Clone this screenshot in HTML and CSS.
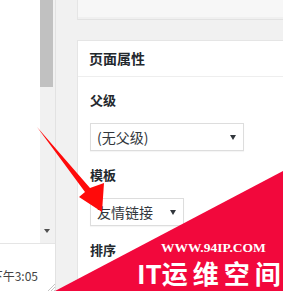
FILE: index.html
```html
<!DOCTYPE html>
<html lang="zh-CN">
<head>
<meta charset="utf-8">
<title>页面属性</title>
<link rel="stylesheet" href="styles.css">
</head>
<body>
<div class="page">
  <div class="editor">
    <div class="editor-main">
      <div class="textarea"></div>
      <div class="scrollbar">
        <div class="thumb"></div>
        <div class="track"><span class="sb-arrow"></span></div>
      </div>
    </div>
    <div class="status">
      <span class="time">最后编辑于 下午3:05</span>
      <svg class="grip" width="8" height="8" viewBox="0 0 8 8"><path d="M8 1 L1 8 M8 4 L4 8 M8 7 L7 8" stroke="#c4c4c4" stroke-width="1"/></svg>
    </div>
  </div>
  <div class="side">
    <div class="box-top"></div>
    <div class="box">
      <h2 class="box-title">页面属性</h2>
      <div class="inside">
        <p class="label">父级</p>
        <div class="select select-wide"><span>(无父级)</span><span class="caret"></span></div>
        <p class="label">模板</p>
        <div class="select select-narrow"><span>友情链接</span><span class="caret"></span></div>
        <p class="label">排序</p>
      </div>
    </div>
  </div>
  <svg class="overlay" width="283" height="291" viewBox="0 0 283 291">
    <polygon points="283,171 55,291 283,291" fill="#f2083c"/>
    <polygon points="37,127 90,188 104,183 102,212 79,197 85,192" fill="#ff0a0a"/>
  </svg>
  <div class="wm-url">WWW.94IP.COM</div>
  <div class="wm-name"><span class="wm-it">IT</span><span class="wm-cn">运维空间</span></div>
</div>
</body>
</html>
```

FILE: styles.css
```css
* { box-sizing: border-box; }
html, body { margin: 0; padding: 0; }
body {
  width: 283px;
  height: 291px;
  overflow: hidden;
  background: #f1f1f1;
  font-family: "Noto Sans CJK SC", "Noto Sans", sans-serif;
  color: #23282d;
}
.page {
  position: relative;
  display: flex;
  width: 283px;
  height: 291px;
  overflow: hidden;
}
.editor {
  width: 56px;
  flex: none;
  display: flex;
  flex-direction: column;
  border-right: 1px solid #e2e2e2;
  background: #fff;
}
.editor-main {
  height: 243px;
  display: flex;
}
.textarea {
  width: 40px;
  background: #fff;
}
.scrollbar {
  width: 15px;
  display: flex;
  flex-direction: column;
  background: #f1f1f1;
}
.thumb {
  width: 13px;
  height: 87px;
  background: #c1c1c1;
}
.track {
  flex: 1;
  display: flex;
  align-items: flex-end;
  justify-content: flex-start;
  padding: 0 0 10px 4px;
}
.sb-arrow {
  width: 0;
  height: 0;
  border-left: 3px solid transparent;
  border-right: 3px solid transparent;
  border-top: 4px solid #505050;
}
.status {
  position: relative;
  flex: 1;
  border-top: 1px solid #e5e5e5;
  display: flex;
  justify-content: flex-end;
  align-items: flex-end;
  padding: 0 17px 7px 0;
  overflow: hidden;
}
.time {
  white-space: nowrap;
  font-size: 12px;
  line-height: 16px;
  color: #444;
}
.grip {
  position: absolute;
  right: 0;
  bottom: 0;
}
.side {
  flex: 1;
  margin-left: 21px;
  display: flex;
  flex-direction: column;
}
.box-top {
  height: 20px;
  background: #f7f7f7;
  border-left: 1px solid #e5e5e5;
  border-bottom: 1px solid #e2e2e2;
  box-shadow: inset 0 -2px 0 #f0f0f0;
}
.box {
  margin-top: 20px;
  flex: 1;
  background: #fff;
  border-top: 1px solid #e5e5e5;
  border-left: 1px solid #e5e5e5;
}
.box-title {
  margin: 0;
  height: 36px;
  padding-left: 11px;
  border-bottom: 1px solid #eee;
  font-size: 14px;
  font-weight: 600;
  line-height: 35px;
  color: #23282d;
}
.inside {
  padding: 13px 12px 0 12px;
}
.label {
  margin: 0;
  font-size: 13px;
  font-weight: 600;
  line-height: 20px;
  color: #23282d;
}
.select {
  display: flex;
  align-items: center;
  justify-content: space-between;
  height: 28px;
  margin: 13px 0 14px 0;
  padding: 0 7px 0 6px;
  border: 1px solid #ddd;
  background: #fff;
  box-shadow: 0 1px 1px rgba(0,0,0,0.04);
  font-size: 14px;
  color: #32373c;
}
.select-wide { width: 154px; }
.select-narrow { width: 94px; }
.caret {
  width: 0;
  height: 0;
  border-left: 3px solid transparent;
  border-right: 3px solid transparent;
  border-top: 5px solid #32373c;
}
.overlay {
  position: absolute;
  left: 0;
  top: 0;
}
.wm-url {
  position: absolute;
  left: 161px;
  top: 241px;
  font-family: "Liberation Serif", serif;
  font-weight: 700;
  font-size: 13.5px;
  line-height: 1;
  color: #fff;
  white-space: nowrap;
}
.wm-name {
  position: absolute;
  left: 137px;
  top: 260px;
  font-family: "Noto Sans CJK SC", sans-serif;
  font-weight: 700;
  font-size: 26px;
  line-height: 1;
  color: #fff;
  white-space: nowrap;
}
.wm-it { letter-spacing: 0; }
.wm-cn { letter-spacing: 5px; }
```
